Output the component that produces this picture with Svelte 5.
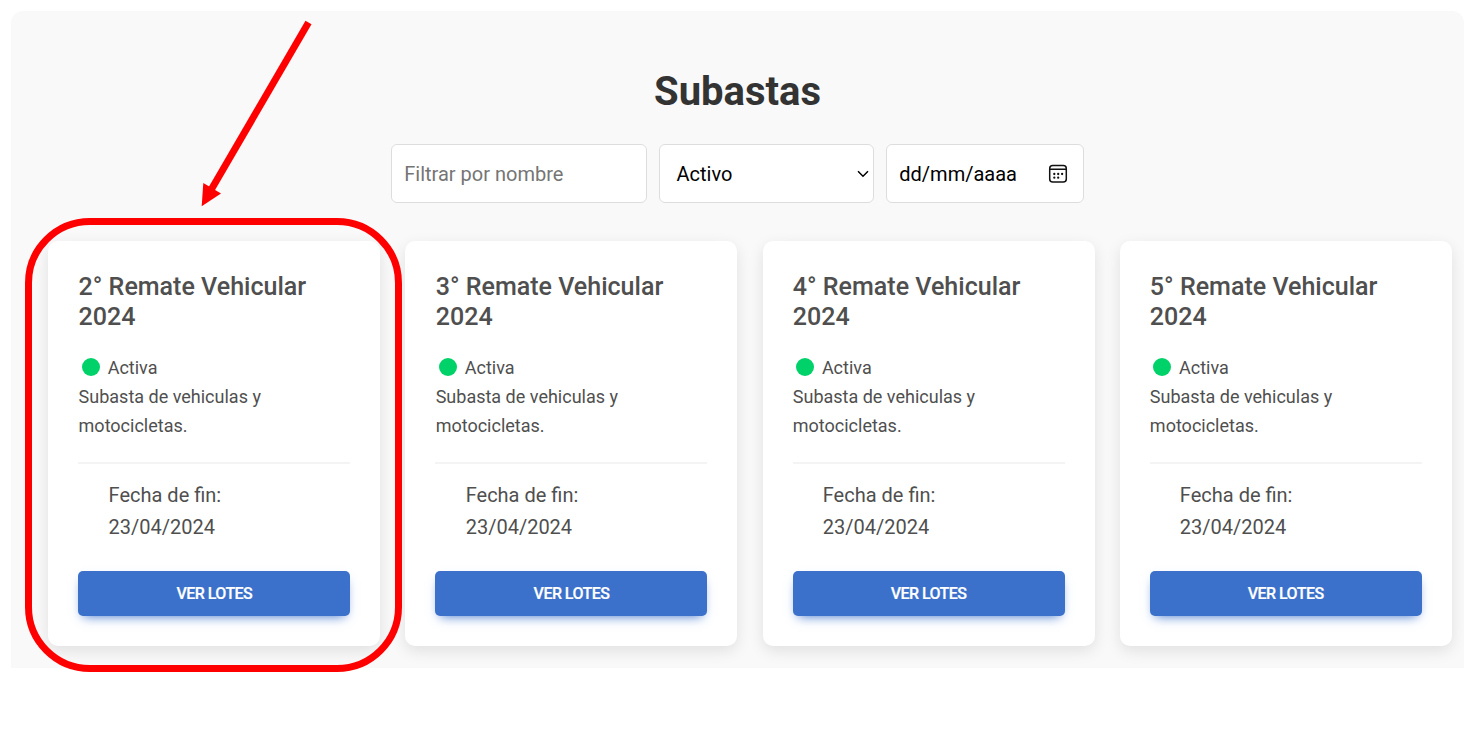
<script>
  const auctions = [2, 3, 4, 5].map((n) => ({
    title: `${n}° Remate Vehicular 2024`,
    status: 'Activa',
    description: 'Subasta de vehiculas y motocicletas.',
    end: '23/04/2024'
  }));
</script>

<div class="page">
  <main class="panel">
    <h1>Subastas</h1>
    <div class="filters">
      <div class="field name">Filtrar por nombre</div>
      <div class="field state">
        <span>Activo</span>
        <svg width="12" height="8" viewBox="0 0 12 8"><path d="M1 1.2 6 6.2 11 1.2" fill="none" stroke="#000" stroke-width="1.5" /></svg>
      </div>
      <div class="field date">
        <span>dd/mm/aaaa</span>
        <svg width="20" height="20" viewBox="0 0 20 20">
          <rect x="1.7" y="1.5" width="16.6" height="16.6" rx="3" fill="none" stroke="#111" stroke-width="1.5" />
          <path d="M2 5.3H18.2" stroke="#111" stroke-width="1.4" />
          <g fill="#111">
            <circle cx="6.3" cy="10" r="1.15" /><circle cx="10.2" cy="10" r="1.15" /><circle cx="14.1" cy="10" r="1.15" />
            <circle cx="6.3" cy="13.7" r="1.15" /><circle cx="10.2" cy="13.7" r="1.15" />
          </g>
        </svg>
      </div>
    </div>
    <div class="cards">
      {#each auctions as a}
        <article>
          <h2>{a.title}</h2>
          <div class="status"><i></i>{a.status}</div>
          <p>{a.description}</p>
          <div class="end">
            <div>Fecha de fin:</div>
            <div>{a.end}</div>
          </div>
          <button>VER LOTES</button>
        </article>
      {/each}
    </div>
  </main>
  <svg class="marks" width="420" height="690" viewBox="0 0 420 690">
    <rect x="28.5" y="221.5" width="370" height="447" rx="61.5" fill="none" stroke="#f00" stroke-width="7" />
    <path d="M308.5 22.5 211 190" stroke="#f00" stroke-width="7" />
    <path d="M201.7 206.3 203.3 183 221 193.5Z" fill="#f00" />
  </svg>
</div>

<style>
  :global(body) { margin: 0; background: #fff; }
  .page {
    position: relative;
    box-sizing: border-box;
    width: 1464px;
    height: 739px;
    padding: 11px 0 0 11px;
    overflow: hidden;
    font-family: Roboto, sans-serif;
    color: #4f4f4f;
  }
  .panel {
    box-sizing: border-box;
    height: 657px;
    padding: 57px 12px 0 37.4px;
    overflow: hidden;
    background: #f9f9f9;
    border-radius: 12px 12px 0 0;
  }
  h1 {
    margin: 0 25.3px 28px 0;
    font-size: 40px;
    line-height: 48px;
    font-weight: 700;
    text-align: center;
    color: #333;
  }
  .filters {
    display: flex;
    gap: 12px;
    margin-left: 342.6px;
  }
  .field {
    box-sizing: border-box;
    display: flex;
    align-items: center;
    justify-content: space-between;
    height: 59px;
    border: 1px solid #ddd;
    border-radius: 6px;
    background: #fff;
    color: #000;
    font-size: 20px;
  }
  .name { width: 256px; padding-left: 12.3px; color: #757575; }
  .state { width: 215px; padding: 0 4px 0 16.5px; }
  .date { width: 198px; padding: 0 15px 0 12.3px; }
  .cards {
    display: grid;
    grid-template-columns: repeat(4, 332px);
    gap: 25.1px;
    margin-top: 37.5px;
  }
  article {
    box-sizing: border-box;
    height: 405.5px;
    padding: 31px 30px 0;
    border-radius: 10px;
    background: #fff;
    box-shadow: 0 5px 15px rgba(0, 0, 0, 0.1);
  }
  h2 {
    margin: 0 0 21px;
    padding-left: 0.2px;
    font-size: 25.05px;
    line-height: 30px;
    font-weight: 500;
  }
  .status {
    display: flex;
    align-items: center;
    font-size: 18px;
    line-height: 29px;
  }
  i {
    width: 18px;
    height: 18px;
    margin: 0 8px 0 3.3px;
    border-radius: 50%;
    background: #00d26a;
  }
  p { margin: 0; padding-left: 0.2px; font-size: 18px; line-height: 29px; }
  .end {
    margin-top: 22.4px;
    padding: 15px 30.2px 0;
    border-top: 2px solid #f4f4f4;
    font-size: 20px;
    line-height: 32px;
  }
  button {
    display: block;
    width: 100%;
    height: 45px;
    margin-top: 27.8px;
    padding: 1px 0 0;
    border: 0;
    border-radius: 5px;
    background: #3b71ca;
    color: #fff;
    font: 500 16px/44px Roboto, sans-serif;
    letter-spacing: -0.55px;
    -webkit-text-stroke: 0.2px #fff;
    box-shadow: 0 5px 11px -5px #3b71ca;
  }
  .marks { position: absolute; left: 0; top: 0; }
</style>
